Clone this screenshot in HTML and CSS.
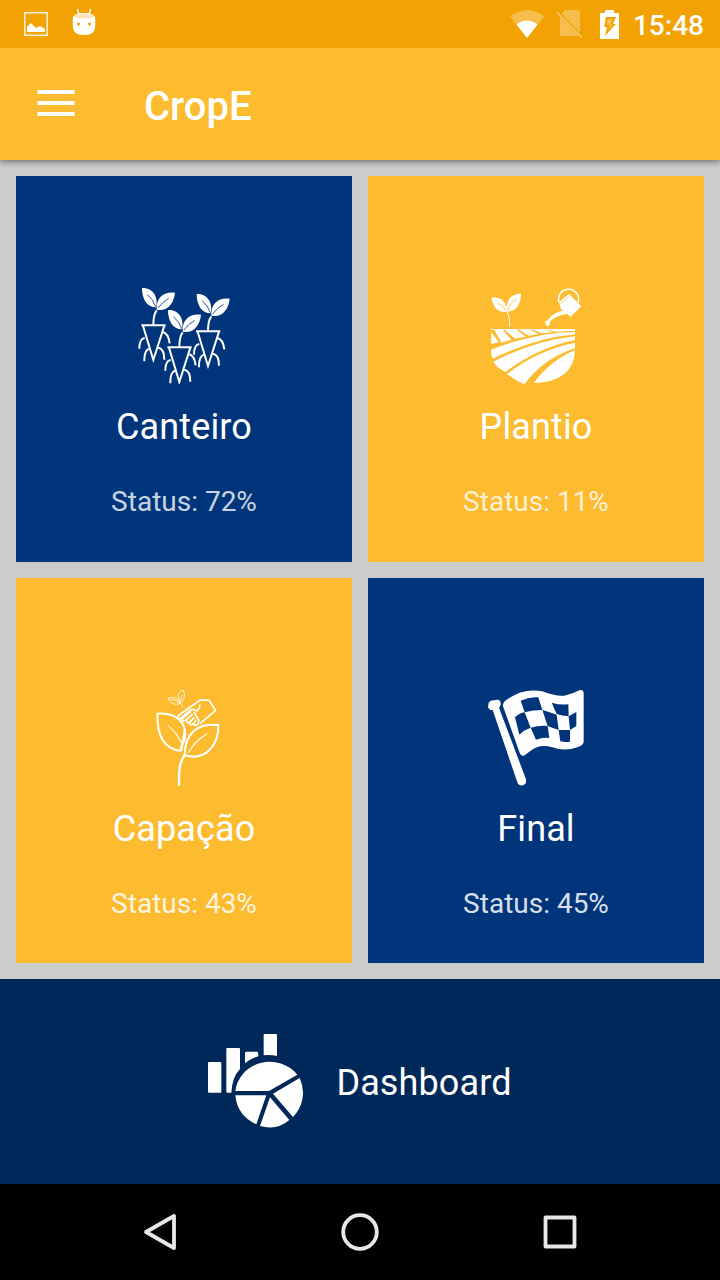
FILE: index.html
```html
<!DOCTYPE html>
<html lang="pt-BR">
<head>
<meta charset="utf-8">
<title>CropE</title>
<link rel="stylesheet" href="styles.css">
</head>
<body>
<div class="screen">
  <header class="status-bar">
    <div class="notifications">
      <svg width="24" height="24" viewBox="0 0 24 24"><path d="M.8.8h22.4v22.4H.8z" fill="none" stroke="#fff" stroke-width="1.5" opacity=".85"/><path d="M3 20v-5l4-4 5 5 4-2 5 3v3z" fill="#fff"/></svg>
      <svg width="24" height="28" viewBox="0 0 24 28"><path d="M5.500 1l1.500 6M18.500 1L17 7" stroke="#fff" stroke-width="1.400"/><path d="M1 9Q3 5 12 5t11 4q1 9-1 14-2 4-10 4T2 23Q0 18 1 9z" fill="#fff"/><path d="M2 8q2-2 10-2t10 2q-2 2.500-10 2.500T2 8z" fill="#fde3b5"/><circle cx="6.500" cy="16" r="1.500" fill="#f2a303"/><circle cx="17.500" cy="16" r="1.500" fill="#f2a303"/></svg>
    </div>
    <div class="system">
      <svg class="wifi" width="34" height="28" viewBox="0 0 34 28"><path d="M0 6.500Q17-6.500 34 6.500L17 28z" fill="#fff" opacity=".3"/><path d="M6.500 14.500Q17 6.500 27.500 14.500L17 28z" fill="#fff"/></svg>
      <svg class="sim" width="26" height="28" viewBox="0 0 26 28"><path d="M9 0h13q2 0 2 2v20L5.500 3.500zM4 7L22.500 26H6q-2 0-2-2z" fill="#fff" opacity=".3"/><path d="M1 2.500l25 25" stroke="#fff" stroke-width="2" opacity=".35"/></svg>
      <svg class="battery" width="19" height="29" viewBox="0 0 19 29"><path d="M5 0h9v3h5v26H0V3h5z" fill="#fff"/><path d="M6 7h10l-3 7h3L5 26l2-9H4z" fill="#f2a303"/><path d="M8 9h5l-3 6h3l-5 6 2-6H6z" fill="#fbe0a8" opacity=".5"/></svg>
      <span class="clock">15:48</span>
    </div>
  </header>
  <div class="toolbar">
    <svg class="menu" width="38" height="26" viewBox="0 0 38 26"><path d="M.5 2h37M.5 13h37M.5 24h37" stroke="#fff" stroke-width="4"/></svg>
    <h1>CropE</h1>
  </div>
  <main class="grid">
    <section class="card blue">
      <svg class="icon" viewBox="18 24 288 288">
        <defs>
          <g id="leaves">
            <path d="M36 24C62 22 87 44 78 82C50 82 36 56 36 24zM135 38C102 34 78 52 80 89C111 96 132 71 135 38z" fill="#fff"/>
            <path d="M52 44Q70 58 77 80M116 55Q96 67 84 84" fill="none" stroke="#00357b" stroke-width="2.500"/>
          </g>
          <g id="seedling">
            <use href="#leaves"/>
            <path d="M80 91Q70 105 70 134M34 136H107M39 137L70 240L103 137M44 174Q28 176 28 206M57 206Q42 212 43 244M97 156Q116 160 119 190M85 203Q103 206 103 239" fill="none" stroke="#fff" stroke-width="6"/>
          </g>
        </defs>
        <use href="#seedling"/><use href="#seedling" x="78" y="66"/><use href="#seedling" x="164" y="18"/>
      </svg>
      <h2>Canteiro</h2><p>Status: 72%</p>
    </section>
    <section class="card yellow">
      <svg class="icon" viewBox="24 24 288 288">
        <path d="M35 52C65 50 82 67 80 96C51 99 36 77 35 52zM123 41C96 41 77 58 80 95C109 95 122 73 123 41z" fill="#fff"/>
        <path d="M54 69Q70 77 79 94M109 56Q91 68 83 91" fill="none" stroke="#fdbb30" stroke-width="2.500"/>
        <path d="M80 94Q90 110 89 141" fill="none" stroke="#fff" stroke-width="3"/>
        <path d="M237 66A30 30 0 1 1 294 68" fill="none" stroke="#fff" stroke-width="4.500"/>
        <path d="M237 66L267 41L304 79L272 110L243 88Z" fill="#fff"/>
        <path d="M240 71L267 48" stroke="#fdbb30" stroke-width="2"/>
        <path d="M261 91Q224 92 201 122L195 124L198 137H208L210 125Q229 104 265 101z" fill="#fff"/>
        <g transform="translate(18 135)" fill="#fff">
          <path d="M15 12H267V18L205 16Q140 12 15 14zM15 20L38 52L16 57zM24 13H49L76 44L46 53zM54 13H90L119 35L87 41zM97 13H130L158 27L128 32zM138 13H170L202 21L168 25zM185 14L267 16L210 20z"/>
          <path d="M15 74Q145 23 267 20V28Q145 40 20 101Q15 90 15 74zM22 110Q145 47 267 34V45Q155 68 58 141Q32 128 22 110zM63 147Q155 75 267 53V70Q174 99 115 178Q87 166 63 147zM143 174Q196 104 267 76Q263 171 143 174z"/>
        </g>
      </svg>
      <h2>Plantio</h2><p>Status: 11%</p>
    </section>
    <section class="card yellow bright">
      <svg class="icon" viewBox="-12 30 288 288">
        <g fill="none" stroke="#fff" stroke-linejoin="round">
          <path d="M52 101C101 98 129 119 135 151L122 212C73 207 51 166 52 101zM235 135C173 128 134 159 134 226C195 243 236 199 235 135z" stroke-width="6"/>
          <path d="M134 149Q139 174 126 195L124 212M136 222C116 248 117 275 117 317" stroke-width="7"/>
          <path d="M202 161Q163 187 145 219Q162 181 202 161zM83 135Q116 162 123 188Q109 157 83 135z" fill="#fff" stroke-width="2"/>
          <path d="M84 55C99 49 117 53 120 70C105 78 88 68 84 55zM130 31C111 35 111 52 121 69C134 62 136 45 130 31zM91 57Q107 58 119 69L127 45M121 70Q128 73 128 82" stroke-width="2.500"/>
          <path d="M149 82L181 60L207 61L227 91L180 131" stroke-width="5"/>
          <path d="M179 73Q181 87 168 93Q158 84 150 91L118 118Q110 112 118 105L150 81M153 94L125 118Q128 128 139 119L158 103M140 119Q139 132 149 127L163 112M149 127Q149 139 160 131L169 119M160 131Q164 141 173 133L177 126M162 96L178 124" stroke-width="5"/>
        </g>
      </svg>
      <h2>Capação</h2><p>Status: 43%</p>
    </section>
    <section class="card blue bright">
      <svg class="icon" viewBox="24 30 288 288">
        <path d="M26 68L32 62L52 59Q62 60 62 69Q63 77 57 83L138 298Q141 312 129 316Q117 319 112 307L38 90Q27 91 24 80zM69 79Q67 72 74 64Q126 22 187 34Q228 50 253 47Q277 42 300 30Q311 29 311 41V186Q309 196 294 201Q254 216 217 202Q177 190 148 215L132 227Q123 230 119 218z" fill="#fff"/>
        <path d="M122 62Q149 49 175 52L187 90Q158 90 134 97zM215 68Q240 76 265 73L266 109Q246 108 230 102zM105 112Q119 98 134 97L152 143Q133 149 118 164zM187 90Q208 96 230 104L236 150Q213 142 203 138zM266 109L289 96V138L270 150zM152 143Q179 135 203 138L208 174Q187 172 168 179zM236 150H270V185Q254 187 241 184z" fill="#00357b"/>
      </svg>
      <h2>Final</h2><p>Status: 45%</p>
    </section>
  </main>
  <section class="dashboard">
    <svg class="icon" viewBox="24 27 288 288">
      <g fill="#fff"><rect x="24" y="111" width="40" height="92" rx="3"/><path d="M82 69H117Q120 69 120 72V132Q96 157 94 203H82Q79 203 79 200V72Q79 69 82 69zM135 83Q135 80 140 80H172Q175 80 175 94Q155 99 135 115zM194 27H228Q231 27 231 30V93Q211 88 191 91V30Q191 27 194 27z"/></g>
      <path d="M106 198A104 98 0 0 1 292 149L207 198zM299 159A103 103 0 0 1 279 276L219 206zM106 211H199L169 298Q112 273 106 211zM210 217L268 285Q231 317 180 303z" fill="#fff"/>
    </svg>
    <h2>Dashboard</h2>
  </section>
  <nav class="nav-bar">
    <svg viewBox="0 0 40 40"><path d="M6 20L34 4V36z"/></svg>
    <svg viewBox="0 0 40 40"><circle cx="20" cy="20" r="16.800"/></svg>
    <svg viewBox="0 0 40 40"><rect x="5.500" y="5.500" width="29" height="29"/></svg>
  </nav>
</div>
</body>
</html>
```
FILE: styles.css
```css
* { box-sizing: border-box; margin: 0; padding: 0; }
body { font-family: Roboto, sans-serif; color: #fff; }
svg { display: block; flex: none; }
.screen { width: 720px; height: 1280px; display: flex; flex-direction: column; background: #ccc; overflow: hidden; }
.status-bar { position: relative; z-index: 1; height: 48px; background: #f2a303; display: flex; justify-content: space-between; padding: 0 16px 0 24px; }
.notifications { display: flex; align-items: center; gap: 24px; }
.notifications svg:last-child { margin-top: -4px; }
.system { display: flex; align-items: center; }
.sim { margin-left: 12px; }
.battery { margin-left: 18px; }
.clock { margin-left: 14px; font-size: 28px; font-weight: 500; line-height: 48px; padding-top: 3px; }
.toolbar { height: 112px; flex: none; background: #fdbb30; display: flex; align-items: center; padding-left: 37px; box-shadow: 0 2px 6px rgba(0, 0, 0, .45); }
.menu { margin-bottom: 2px; }
.toolbar h1 { margin-left: 69px; font-size: 40px; font-weight: 500; line-height: 48px; padding-top: 6px; }
.grid { height: 819px; flex: none; padding: 16px; display: grid; grid-template: 386px 385px / 1fr 1fr; gap: 16px; }
.card { display: flex; flex-direction: column; align-items: center; padding-top: 112px; }
.blue { background: #00357b; }
.yellow { background: #fdbb30; }
.icon { width: 96px; height: 96px; }
h2 { font-size: 36px; font-weight: 400; line-height: 42px; letter-spacing: .12px; }
.card h2 { margin-top: 22px; }
.card p { margin-top: 37px; font-size: 28px; line-height: 33px; color: rgba(255, 255, 255, .8); }
.bright p { color: rgba(255, 255, 255, .87); }
.dashboard { height: 205px; flex: none; background: #002859; display: flex; align-items: center; justify-content: center; gap: 32px; }
.dashboard h2 { padding-top: 2px; }
.nav-bar { height: 96px; background: #000; display: flex; justify-content: center; align-items: center; gap: 160px; }
.nav-bar svg { width: 40px; height: 40px; fill: none; stroke: #e8e8e8; stroke-width: 3.8; stroke-linejoin: round; }
```
